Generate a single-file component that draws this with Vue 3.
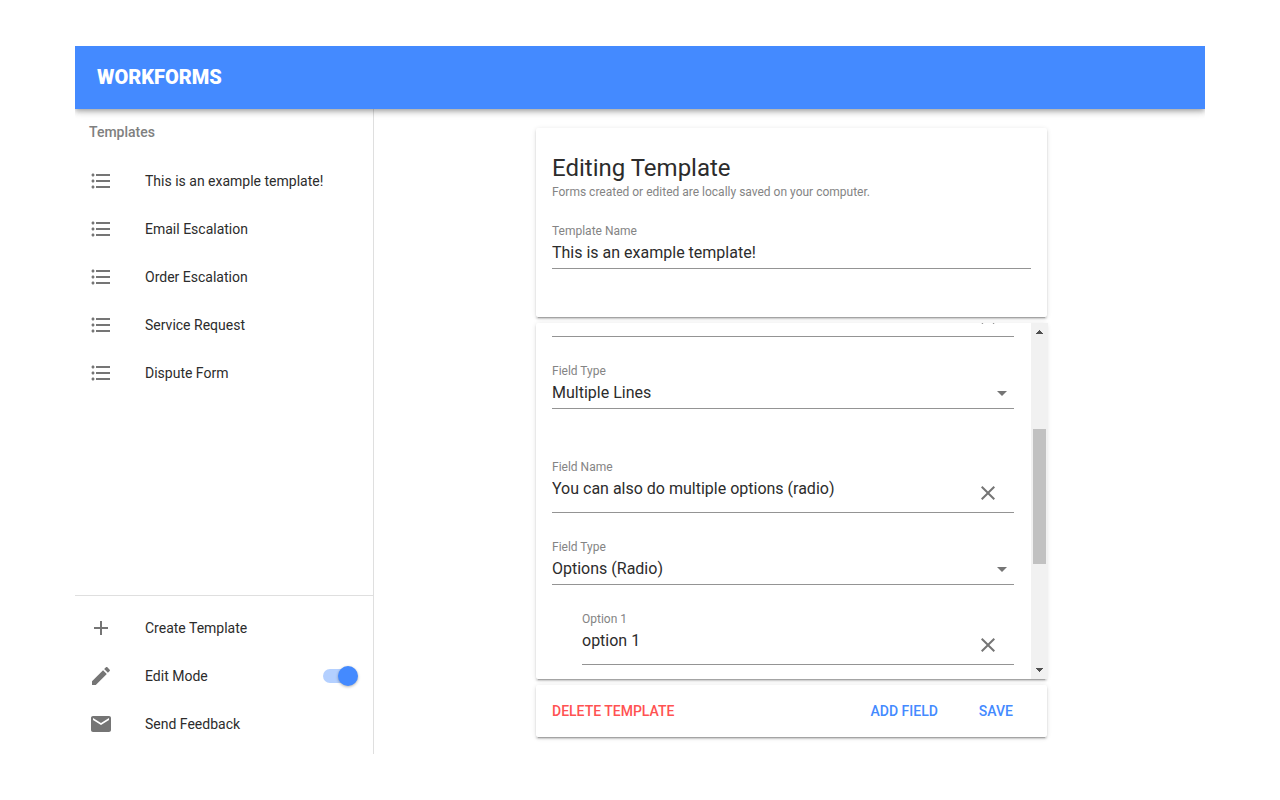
<script setup>
import { ref } from 'vue'

const icons = {
  list: 'M4 10.5c-.83 0-1.5.67-1.5 1.5s.67 1.5 1.5 1.5 1.5-.67 1.5-1.5-.67-1.5-1.5-1.5zm0-6c-.83 0-1.5.67-1.5 1.5S3.17 7.5 4 7.5 5.5 6.83 5.5 6 4.83 4.5 4 4.5zm0 12c-.83 0-1.5.68-1.5 1.5s.68 1.5 1.5 1.5 1.5-.68 1.5-1.5-.67-1.5-1.5-1.5zM7 19h14v-2H7v2zm0-6h14v-2H7v2zm0-8v2h14V5H7z',
  add: 'M19 13h-6v6h-2v-6H5v-2h6V5h2v6h6v2z',
  edit: 'M3 17.25V21h3.75L17.81 9.94l-3.75-3.75L3 17.25zM20.71 7.04c.39-.39.39-1.02 0-1.41l-2.34-2.34c-.39-.39-1.02-.39-1.41 0l-1.83 1.83 3.75 3.75 1.83-1.83z',
  mail: 'M20 4H4c-1.1 0-1.99.9-1.99 2L2 18c0 1.1.9 2 2 2h16c1.1 0 2-.9 2-2V6c0-1.1-.9-2-2-2zm0 4l-8 5-8-5V6l8 5 8-5v2z',
  close: 'M19 6.41L17.59 5 12 10.59 6.41 5 5 6.41 10.59 12 5 17.59 6.41 19 12 13.41 17.59 19 19 17.59 13.41 12z',
  down: 'M7 10l5 5 5-5z'
}

const templates = ['This is an example template!', 'Email Escalation', 'Order Escalation', 'Service Request', 'Dispute Form']
const editMode = ref(true)
const templateName = ref(templates[0])
const fieldTypes = ['Multiple Lines', 'Options (Radio)']
const fields = ref([
  { name: '', type: 'Multiple Lines', options: [] },
  { name: 'You can also do multiple options (radio)', type: 'Options (Radio)', options: ['option 1'] }
])
</script>

<template>
  <div class="page">
    <header class="toolbar"><h1>WORKFORMS</h1></header>
    <div class="body">
      <nav class="sidebar">
        <h2>Templates</h2>
        <ul>
          <li v-for="name in templates" :key="name">
            <button class="item" type="button">
              <svg viewBox="0 0 24 24"><path :d="icons.list" /></svg>
              <span>{{ name }}</span>
            </button>
          </li>
        </ul>
        <div class="actions">
          <button class="item" type="button">
            <svg viewBox="0 0 24 24"><path :d="icons.add" /></svg>
            <span>Create Template</span>
          </button>
          <label class="item">
            <svg viewBox="0 0 24 24"><path :d="icons.edit" /></svg>
            <span>Edit Mode</span>
            <input v-model="editMode" class="switch" type="checkbox" />
          </label>
          <button class="item" type="button">
            <svg viewBox="0 0 24 24"><path :d="icons.mail" /></svg>
            <span>Send Feedback</span>
          </button>
        </div>
      </nav>

      <main>
        <section class="card intro">
          <h2>Editing Template</h2>
          <p>Forms created or edited are locally saved on your computer.</p>
          <div class="field">
            <label for="template-name">Template Name</label>
            <div class="control">
              <input id="template-name" v-model="templateName" type="text" />
            </div>
          </div>
        </section>

        <section class="card editor">
          <div class="fields">
            <template v-for="(field, i) in fields" :key="i">
              <div class="field tall first">
                <label v-if="field.name" :for="`name-${i}`">Field Name</label>
                <div class="control">
                  <input :id="`name-${i}`" v-model="field.name" type="text" aria-label="Field Name" />
                  <button class="clear" type="button" aria-label="Remove field">
                    <svg viewBox="0 0 24 24"><path :d="icons.close" /></svg>
                  </button>
                </div>
              </div>
              <div class="field">
                <label :for="`type-${i}`">Field Type</label>
                <div class="control">
                  <select :id="`type-${i}`" v-model="field.type">
                    <option v-for="type in fieldTypes" :key="type">{{ type }}</option>
                  </select>
                  <svg viewBox="0 0 24 24"><path :d="icons.down" /></svg>
                </div>
              </div>
              <div v-for="(option, j) in field.options" :key="j" class="field tall nested">
                <label :for="`option-${i}-${j}`">Option {{ j + 1 }}</label>
                <div class="control">
                  <input :id="`option-${i}-${j}`" v-model="field.options[j]" type="text" />
                  <button class="clear" type="button" aria-label="Remove option">
                    <svg viewBox="0 0 24 24"><path :d="icons.close" /></svg>
                  </button>
                </div>
              </div>
            </template>
          </div>
          <div class="scrollbar" aria-hidden="true">
            <svg viewBox="0 0 17 17" shape-rendering="crispEdges"><path d="M8 7h1v1h1v1h1v1h1v1H5v-1h1V9h1V8h1z" /></svg>
            <div class="track"><div class="thumb"></div></div>
            <svg viewBox="0 0 17 17" shape-rendering="crispEdges"><path d="M5 6h7v1h-1v1h-1v1H9v1H8V9H7V8H6V7H5z" /></svg>
          </div>
        </section>

        <section class="card footer">
          <button class="danger" type="button">DELETE TEMPLATE</button>
          <button type="button">ADD FIELD</button>
          <button type="button">SAVE</button>
        </section>
      </main>
    </div>
  </div>
</template>

<style>
body {
  background: #fff;
}
</style>

<style scoped>
* {
  box-sizing: border-box;
}
.page {
  display: flex;
  flex-direction: column;
  height: 100vh;
  padding: 46px 75px;
  font-family: Roboto, "Liberation Sans", sans-serif;
  color: #2c2c2c;
}
h1, h2, p, ul {
  margin: 0;
  padding: 0;
}
ul {
  list-style: none;
}
button, input, select {
  margin: 0;
  padding: 0;
  border: 0;
  background: none;
  font: inherit;
  color: inherit;
  outline: none;
  appearance: none;
}
button {
  cursor: pointer;
}
svg {
  flex: none;
  width: 24px;
  height: 24px;
  fill: #757575;
}
.toolbar {
  position: relative;
  display: flex;
  align-items: center;
  height: 63px;
  padding: 0 22px 2px;
  background: #448aff;
  color: #fff;
  box-shadow: 0 2px 4px -1px rgba(0, 0, 0, 0.2), 0 4px 5px rgba(0, 0, 0, 0.14), 0 1px 10px rgba(0, 0, 0, 0.12);
  clip-path: inset(0 0 -20px 0);
  z-index: 1;
}
.toolbar h1 {
  font-size: 20px;
  font-weight: 900;
  line-height: 26px;
}
.body {
  display: flex;
  flex: 1;
  min-height: 0;
}
.sidebar {
  display: flex;
  flex-direction: column;
  flex: 0 0 299px;
  border-right: 1px solid #dfdfdf;
}
.sidebar h2 {
  padding: 0 14px;
  font-size: 14px;
  font-weight: 500;
  line-height: 46px;
  height: 48px;
  color: #808080;
}
.item {
  display: flex;
  align-items: center;
  width: 100%;
  height: 48px;
  padding: 0 16px 0 14px;
  font-size: 14px;
  text-align: left;
  cursor: pointer;
}
.item span {
  flex: 1;
  margin-left: 32px;
}
.actions {
  margin-top: auto;
  padding: 8px 0 6px;
  border-top: 1px solid #dfdfdf;
}
.switch {
  display: flex;
  align-items: center;
  width: 34px;
  height: 14px;
  border-radius: 7px;
  background: rgba(0, 0, 0, 0.38);
  cursor: pointer;
}
.switch::before {
  content: "";
  flex: none;
  width: 20px;
  height: 20px;
  border-radius: 50%;
  background: #fafafa;
  box-shadow: 0 1px 3px rgba(0, 0, 0, 0.3);
}
.switch:checked {
  background: #b4d0ff;
}
.switch:checked::before {
  margin-left: 15px;
  background: #448aff;
}
main {
  display: flex;
  flex: 1;
  flex-direction: column;
  align-items: center;
  gap: 6px;
  min-width: 0;
  padding: 19px 16px 17px 20px;
}
.card {
  flex: none;
  width: 100%;
  max-width: 511px;
  border-radius: 2px;
  background: #fff;
  box-shadow: 0 3px 1px -2px rgba(0, 0, 0, 0.2), 0 2px 2px rgba(0, 0, 0, 0.14), 0 1px 5px rgba(0, 0, 0, 0.12);
}
.intro {
  padding: 24px 16px 48px;
}
.intro h2 {
  font-size: 24px;
  font-weight: 400;
  line-height: 32px;
}
.intro p {
  font-size: 12px;
  line-height: 16px;
  color: #848484;
}
.field {
  flex: none;
  margin-top: 24px;
}
.intro .field {
  margin-top: 21px;
}
.field label {
  display: block;
  height: 20px;
  font-size: 12px;
  line-height: 20px;
  color: #848484;
}
.control {
  display: flex;
  align-items: flex-start;
  height: 28px;
  border-bottom: 1px solid #949494;
}
.control input, .control select {
  flex: 1;
  min-width: 0;
  height: 24px;
  font-size: 16px;
  line-height: 24px;
}
.tall .control {
  height: 36px;
}
.first {
  margin-top: 48px;
}
.nested {
  margin-left: 30px;
}
.clear {
  display: flex;
  align-items: center;
  justify-content: center;
  width: 40px;
  height: 32px;
  margin-right: 6px;
}
.editor {
  display: flex;
  flex: 1;
  min-height: 0;
}
.fields {
  display: flex;
  flex: 1;
  flex-direction: column;
  justify-content: flex-end;
  min-width: 0;
  overflow: hidden;
  padding: 0 17px 14px 16px;
}
.scrollbar {
  display: flex;
  flex: none;
  flex-direction: column;
  width: 17px;
  margin-right: -1px;
  background: #f1f1f1;
}
.scrollbar svg {
  width: 17px;
  height: 17px;
  fill: #505050;
}
.track {
  display: flex;
  flex: 1;
  flex-direction: column;
  justify-content: center;
  padding: 28px 2px 36px;
}
.track::before {
  content: "";
  flex: 61;
}
.track::after {
  content: "";
  flex: 62;
}
.thumb {
  flex: 135;
  background: #c1c1c1;
}
.footer {
  display: flex;
  align-items: center;
  gap: 25px;
  height: 52px;
  padding: 0 26px 0 8px;
  font-size: 14px;
  font-weight: 500;
}
.footer button {
  height: 36px;
  padding: 0 8px;
  color: #448aff;
}
.footer .danger {
  margin-right: auto;
  color: #ff5252;
}
</style>
